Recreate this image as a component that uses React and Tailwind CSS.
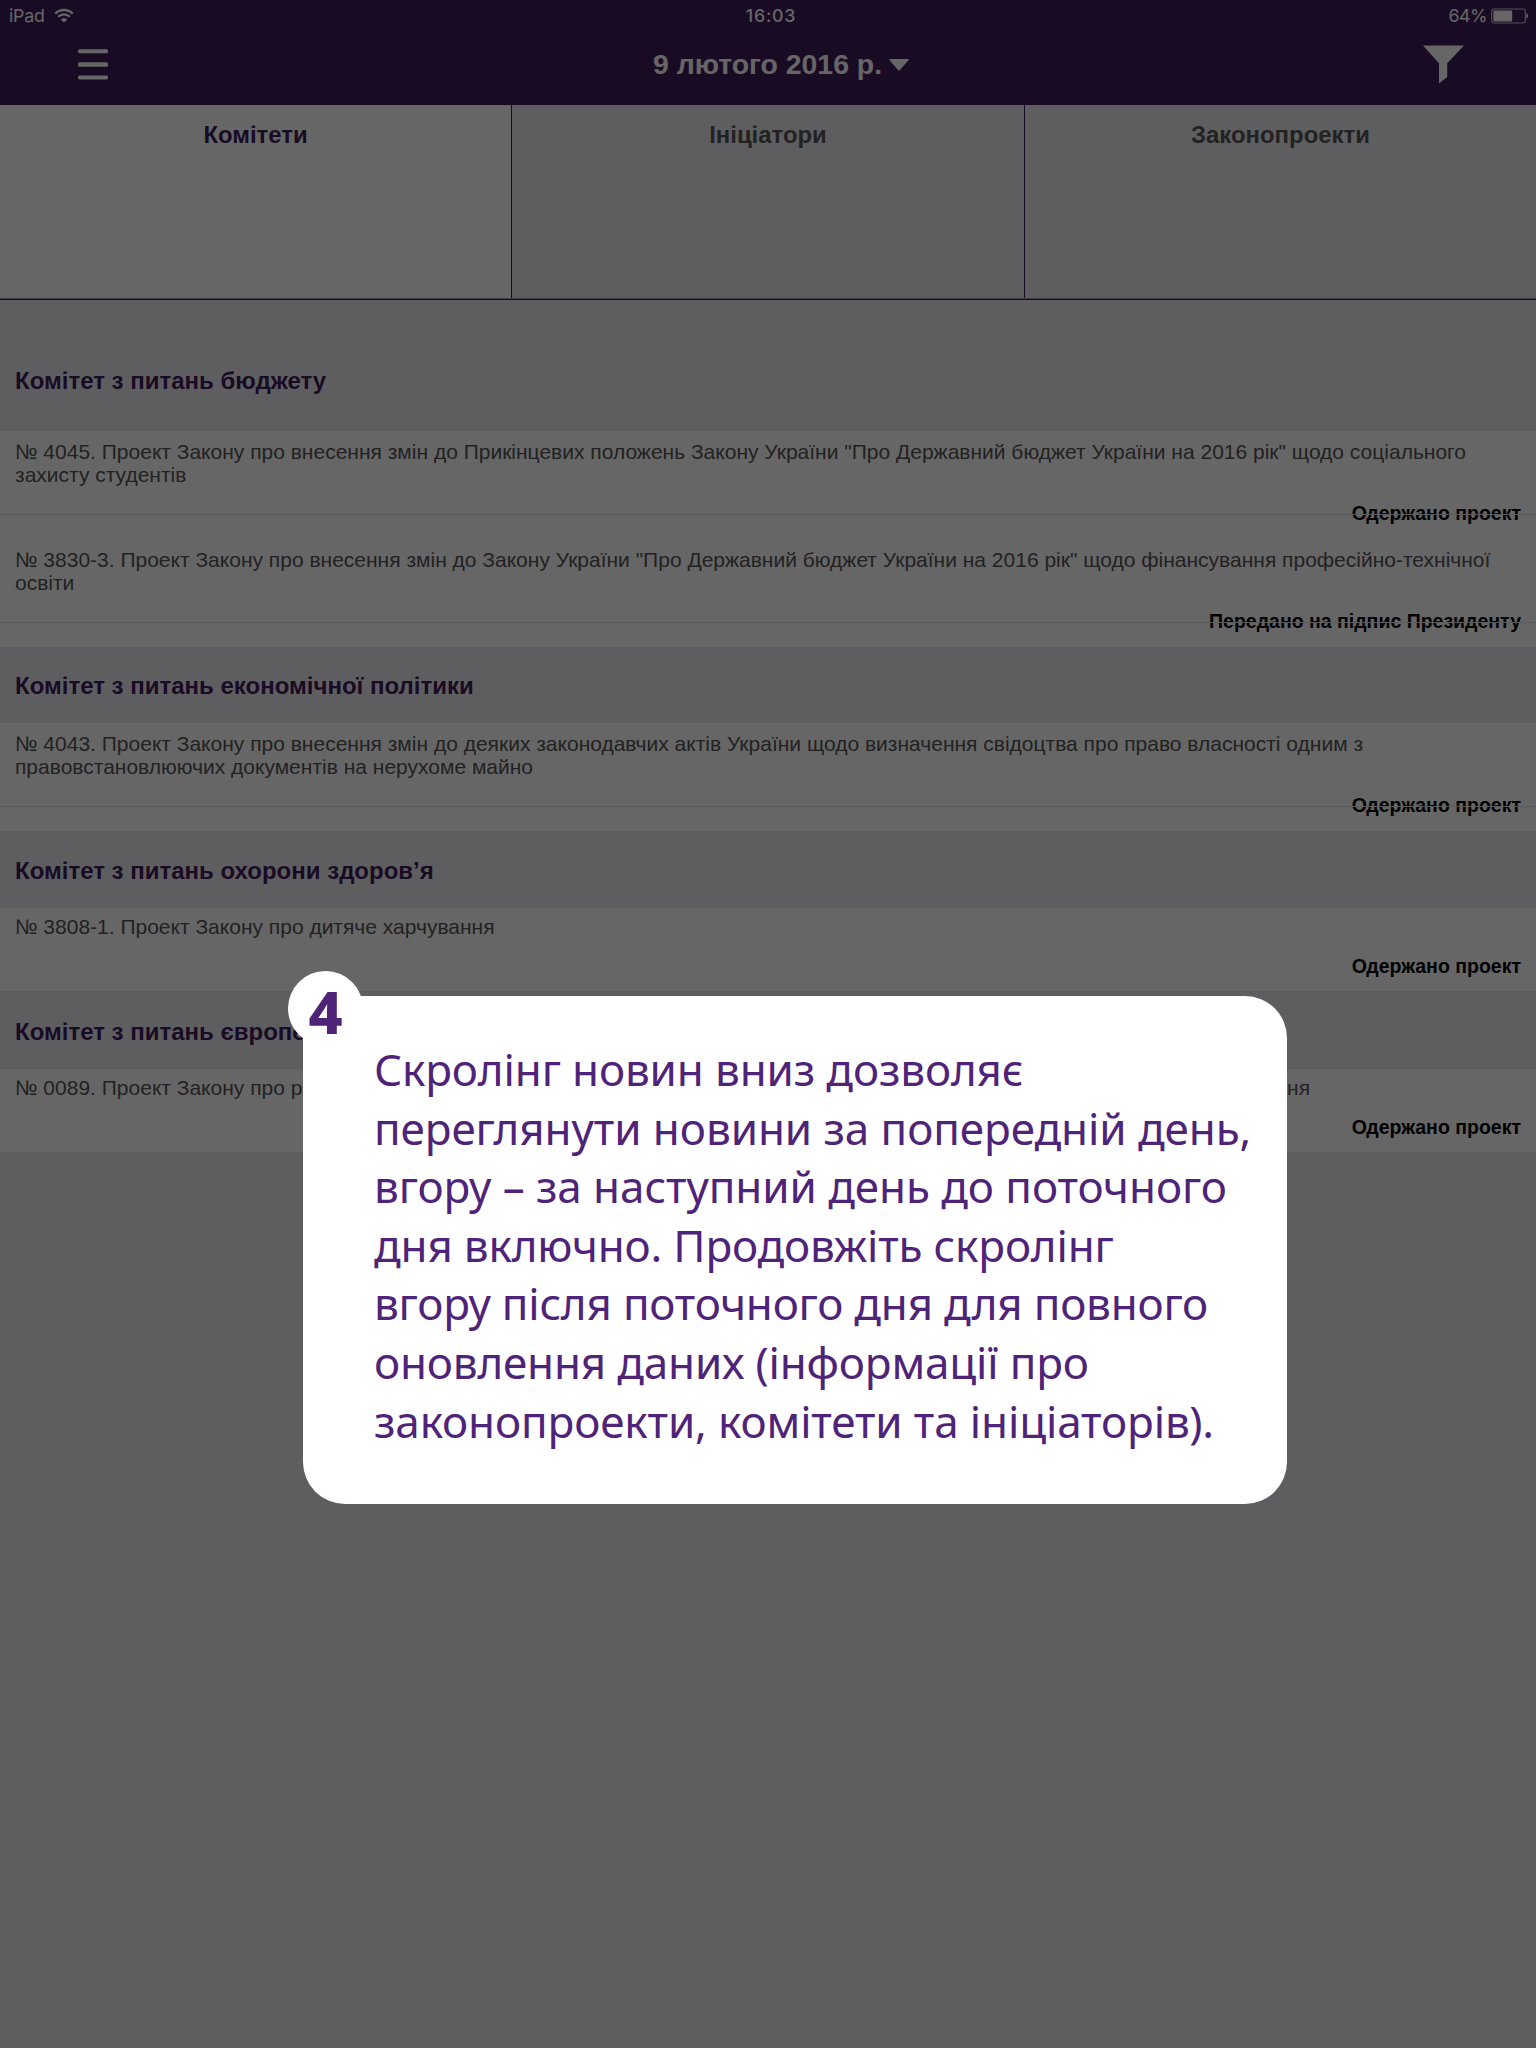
const sections = [
  {
    title: "Комітет з питань бюджету",
    heading: "h-[131px] pt-[67px]",
    bills: [
      {
        lines: [
          '№ 4045. Проект Закону про внесення змін до Прикінцевих положень Закону України "Про Державний бюджет України на 2016 рік" щодо соціального',
          "захисту студентів",
        ],
        status: "Одержано проект",
      },
      {
        lines: [
          '№ 3830-3. Проект Закону про внесення змін до Закону України "Про Державний бюджет України на 2016 рік" щодо фінансування професійно-технічної',
          "освіти",
        ],
        status: "Передано на підпис Президенту",
      },
    ],
  },
  {
    title: "Комітет з питань економічної політики",
    heading: "h-[76px] pt-[25px]",
    bills: [
      {
        lines: [
          "№ 4043. Проект Закону про внесення змін до деяких законодавчих актів України щодо визначення свідоцтва про право власності одним з",
          "правовстановлюючих документів на нерухоме майно",
        ],
        status: "Одержано проект",
      },
    ],
  },
  {
    title: "Комітет з питань охорони здоров’я",
    heading: "h-[77px] pt-[26px]",
    bills: [{ lines: ["№ 3808-1. Проект Закону про дитяче харчування"], status: "Одержано проект" }],
  },
  {
    title: "Комітет з питань європе",
    heading: "h-[77px] pt-[26px]",
    bills: [{ lines: ["№ 0089. Проект Закону про р"], tail: "ня", status: "Одержано проект" }],
  },
];

const tipLines = [
  { text: "Скролінг новин вниз дозволяє", tracking: "tracking-[-0.14px]" },
  { text: "переглянути новини за попередній день,", tracking: "tracking-[-0.07px]" },
  { text: "вгору – за наступний день до поточного", tracking: "tracking-[-0.07px]" },
  { text: "дня включно. Продовжіть скролінг", tracking: "tracking-[-0.17px]" },
  { text: "вгору після поточного дня для повного", tracking: "tracking-[-0.21px]" },
  { text: "оновлення даних (інформації про", tracking: "tracking-[-0.18px]" },
  { text: "законопроекти, комітети та ініціаторів).", tracking: "tracking-[-0.12px]" },
];

function StatusBar() {
  return (
    <div className="grid h-[32px] grid-cols-3 items-center pl-[9px] pr-[8px] font-['Inter',sans-serif] text-[17.8px] leading-[32px] text-white">
      <div className="flex items-center gap-[9px]">
        <span className="tracking-[-0.2px]">iPad</span>
        <svg width="20" height="16" viewBox="0 0 20 16" className="-mt-px" fill="none" stroke="#fff" strokeWidth="2.3">
          <path d="M1.3 5.6C6 .8 14 .8 18.7 5.6" />
          <path d="M4.2 8.8C7.4 5.6 12.6 5.6 15.8 8.8" />
          <path d="M10 14.6L6.8 11.4C8.6 9.7 11.4 9.7 13.2 11.4Z" fill="#fff" stroke="none" />
        </svg>
      </div>
      <div className="pl-[5px] text-center font-medium tracking-[0.75px]">16:03</div>
      <div className="flex items-center justify-end gap-[4px]">
        <span className="tracking-[-0.5px]">64%</span>
        <svg width="37" height="16" viewBox="0 0 37 16" className="-mt-px">
          <rect x="0.7" y="1" width="33.6" height="14" rx="2.5" fill="none" stroke="#fff" strokeOpacity="0.75" strokeWidth="1.1" />
          <rect x="2.4" y="2.6" width="18.8" height="10.8" rx="0.8" fill="#fff" />
          <path d="M35.4 5.3C37.6 6 37.6 10 35.4 10.7Z" fill="#fff" />
        </svg>
      </div>
    </div>
  );
}

function NavBar() {
  return (
    <div className="flex h-[73px] items-start justify-between pl-[78px] pr-[72px]">
      <svg width="30" height="32" viewBox="0 0 30 32" className="mt-[16px]" fill="#fff">
        <rect y="1.2" width="30" height="4" rx="1.5" />
        <rect y="14.3" width="30" height="4.4" rx="1.5" />
        <rect y="27.4" width="30" height="4.2" rx="1.5" />
      </svg>
      <div className="mt-[16px] ml-[31px] flex items-start gap-[7px] text-[28.4px] font-bold leading-[32px] text-white">
        <span className="whitespace-nowrap">9 лютого 2016 р.</span>
        <svg width="20" height="12" viewBox="0 0 20 12" className="mt-[11px]">
          <path d="M1 0H19Q20.4 0 19.4 1.2L11 10.9Q10 12 9 10.9L.6 1.2Q-.4 0 1 0Z" fill="#fff" />
        </svg>
      </div>
      <svg width="41" height="39" viewBox="0 0 41 39" className="mt-[13px]">
        <path d="M0 .4H41L24.2 18.2V32L16 38.6V18.2Z" fill="#fff" />
      </svg>
    </div>
  );
}

function Tabs() {
  return (
    <div className="grid h-[195px] grid-cols-[512px_513px_511px] border-b border-[#3f1c5a] bg-[#a090b0] pb-px text-center text-[23.9px] font-bold leading-[28px] text-[#555]">
      <div className="border-r border-[#3f1c5a] bg-white pt-[16px] text-[#3f1c5a]">Комітети</div>
      <div className="border-r border-[#3f1c5a] bg-[#ececf1] pt-[16px]">Ініціатори</div>
      <div className="bg-[#ececf1] pt-[16px]">Законопроекти</div>
    </div>
  );
}

function Bill({ lines, tail, status }) {
  const single = lines.length === 1;
  return (
    <div className={single ? "relative h-[84px] bg-white pt-[7px]" : "relative h-[108px] bg-white pt-[9px]"}>
      <div className="flex w-[1310px] justify-between pl-[15px] text-[21px] leading-[23px] text-[#555]">
        <div className="whitespace-nowrap">
          {lines.map((line) => (
            <div key={line}>{line}</div>
          ))}
        </div>
        {tail && <div>{tail}</div>}
      </div>
      <div className={single ? "mt-[17px] pr-[15px] text-right text-[19.5px] font-bold leading-[22px] text-black" : "mt-[16px] pr-[15px] text-right text-[19.5px] font-bold leading-[22px] text-black"}>
        {status}
      </div>
      <div className="absolute inset-x-0 top-[83px] h-px bg-[#e4e4e8]" />
    </div>
  );
}

function Tip() {
  return (
    <div className="absolute left-[303px] top-[996px] h-[507.5px] w-[983.5px] rounded-[42px] bg-white pl-[71px] pt-[44px] font-['Noto_Sans',sans-serif] text-[#4f2478]">
      <div className="absolute left-[-15px] top-[-25px] flex size-[75px] items-center justify-center rounded-full bg-white text-[59px] font-extrabold leading-[75px]">
        <span className="mt-[5px]">4</span>
      </div>
      <div className="relative whitespace-nowrap text-[44px] leading-[58.6px]">
        {tipLines.map(({ text, tracking }) => (
          <div key={text} className={tracking}>{text}</div>
        ))}
      </div>
    </div>
  );
}

export default function App() {
  return (
    <div className="relative h-[2048px] w-[1536px] overflow-hidden bg-[#ececf1] font-['Liberation_Sans',Arial,sans-serif]">
      <header className="h-[105px] bg-[#3f1c5a]">
        <StatusBar />
        <NavBar />
      </header>
      <Tabs />
      <main>
        {sections.map(({ title, heading, bills }) => (
          <section key={title}>
            <h2 className={`${heading} pl-[15px] text-[24px] font-bold leading-[27px] text-[#3f1c5a]`}>{title}</h2>
            {bills.map((bill) => (
              <Bill key={bill.lines[0]} {...bill} />
            ))}
          </section>
        ))}
      </main>
      <div className="absolute inset-0 bg-black/60" />
      <Tip />
    </div>
  );
}
